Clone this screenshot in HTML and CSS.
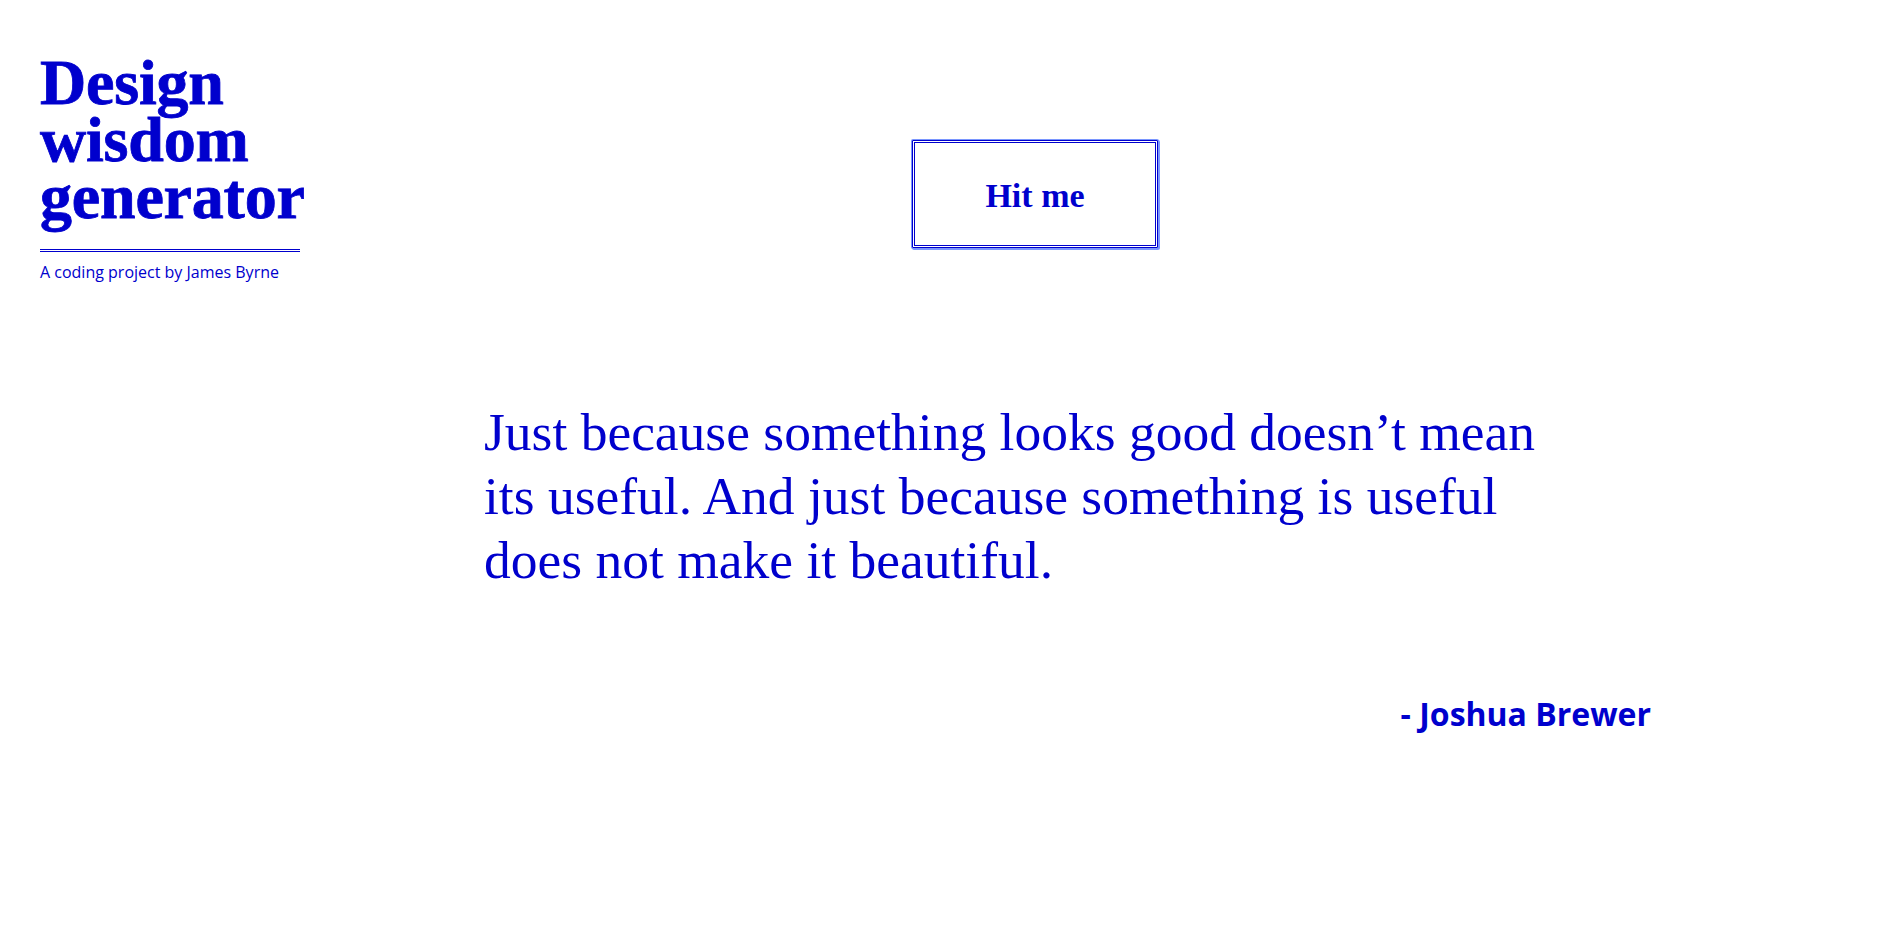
FILE: index.html
```html
<!DOCTYPE html>
<html lang="en">
<head>
<meta charset="utf-8">
<title>Design wisdom generator</title>
<link rel="stylesheet" href="styles.css">
</head>
<body>
  <header class="top">
    <div class="brand">
      <h1 class="title">Design<br>wisdom<br>generator</h1>
      <p class="byline">A coding project by James Byrne</p>
    </div>
    <button class="hit">Hit me</button>
  </header>
  <main class="wisdom">
    <p class="quote">Just because something looks good doesn’t mean its useful. And just because something is useful does not make it beautiful.</p>
    <p class="author">- Joshua Brewer</p>
  </main>
</body>
</html>
```

FILE: styles.css
```css
html, body {
  margin: 0;
  padding: 0;
  background: #ffffff;
}

body {
  color: #0000cd;
  font-family: "Open Sans", "Liberation Sans", sans-serif;
}

.top {
  display: flex;
  align-items: flex-start;
  padding: 54px 40px 0 40px;
}

.brand {
  width: 260px;
  flex: none;
}

.title {
  margin: 0;
  padding-bottom: 24px;
  border-bottom: 3px double #0000cd;
  font-family: "Liberation Serif", "Times New Roman", serif;
  font-weight: 700;
  font-size: 64px;
  line-height: 57px;
  letter-spacing: -0.2px;
  -webkit-text-stroke: 0.8px #0000cd;
}

.byline {
  margin: 9px 0 0 0;
  font-size: 16px;
  line-height: normal;
}

.hit {
  flex: none;
  margin: 86px 0 0 612px;
  width: 246px;
  height: 108px;
  padding: 4px 0 0 0;
  background: #ffffff;
  color: #0000cd;
  border: 3px double #0000cd;
  border-radius: 1px;
  box-shadow: 0 0 0 1px #7a96ff, 1px 1px 0 1px #7a96ff;
  font-family: "Liberation Serif", "Times New Roman", serif;
  font-weight: 700;
  font-size: 34px;
  cursor: pointer;
}

.wisdom {
  margin: 0 0 0 484px;
  padding-top: 117px;
  width: 1167px;
}

.quote {
  margin: 0;
  width: 1075px;
  font-family: "Liberation Serif", "Times New Roman", serif;
  font-size: 53.5px;
  line-height: 64px;
}

.author {
  margin: 100px 0 0 0;
  text-align: right;
  font-weight: 700;
  font-size: 32px;
  line-height: normal;
}
```
